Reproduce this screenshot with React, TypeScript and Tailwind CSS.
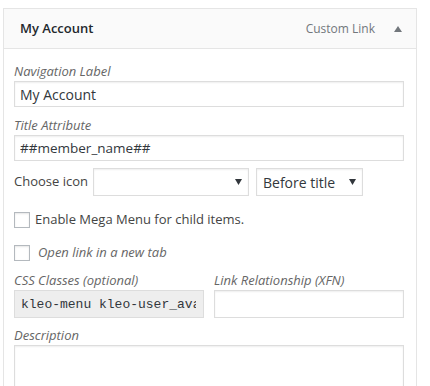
import { useState } from "react";

const font = "font-['Open_Sans','Liberation_Sans',sans-serif]";

function Label({ children }: { children: React.ReactNode }) {
  return (
    <label className="block h-[20px] text-[13px] italic leading-[20px] text-[#666]">
      {children}
    </label>
  );
}

function Checkbox({ checked, onChange }: { checked: boolean; onChange: () => void }) {
  return (
    <button
      type="button"
      onClick={onChange}
      className="h-[16px] w-[16px] shrink-0 border border-[#b4b9be] bg-white shadow-[inset_0_1px_2px_rgba(0,0,0,0.1)]"
    >
      {checked && <span className="block text-[12px] leading-[14px] text-[#1e8cbe]">✓</span>}
    </button>
  );
}

function Caret() {
  return (
    <svg width="7" height="6" viewBox="0 0 7 6" className="shrink-0">
      <path d="M0 0h7L3.5 6z" fill="#32373c" />
    </svg>
  );
}

export default function App() {
  const [label, setLabel] = useState("My Account");
  const [title, setTitle] = useState("##member_name##");
  const [mega, setMega] = useState(false);
  const [newTab, setNewTab] = useState(false);
  const [xfn, setXfn] = useState("");
  const [desc, setDesc] = useState("");

  return (
    <div className={`h-[386px] w-[430px] overflow-hidden bg-white ${font}`}>
      <div className="ml-[3px] mt-[8px] w-[414px] border border-[#e5e5e5]">
        <div className="flex h-[40px] items-center border-b border-[#e5e5e5] bg-[#fafafa] pl-[16px] pr-[14px]">
          <span className="flex-1 text-[13px] font-semibold text-[#23282d]">My Account</span>
          <span className="text-[12px] text-[#72777c]">Custom Link</span>
          <svg width="8" height="6" viewBox="0 0 8 6" className="ml-[19px]">
            <path d="M0 6h8L4 0z" fill="#72777c" />
          </svg>
        </div>

        <div className="pl-[10px] pr-[12px] pt-[12px]">
          <Label>Navigation Label</Label>
          <input
            value={label}
            onChange={(e) => setLabel(e.target.value)}
            className="block h-[26px] w-full border border-[#ddd] px-[5px] text-[14px] text-[#32373c] shadow-[inset_0_1px_2px_rgba(0,0,0,0.07)] outline-none"
          />

          <div className="mt-[8px]">
            <Label>Title Attribute</Label>
          </div>
          <input
            value={title}
            onChange={(e) => setTitle(e.target.value)}
            className="block h-[26px] w-full border border-[#ddd] px-[5px] text-[13.5px] text-[#32373c] shadow-[inset_0_1px_2px_rgba(0,0,0,0.07)] outline-none"
          />

          <div className="mt-[7px] flex h-[28px] items-center">
            <span className="mr-[5px] text-[13px] text-[#444]">Choose icon</span>
            <div className="flex h-[28px] w-[156px] items-center justify-end border border-[#ddd] pr-[6px] shadow-[inset_0_1px_2px_rgba(0,0,0,0.07)]">
              <Caret />
            </div>
            <div className="ml-[7px] flex h-[28px] w-[107px] items-center border border-[#ddd] pl-[6px] pr-[6px] shadow-[inset_0_1px_2px_rgba(0,0,0,0.07)]">
              <span className="flex-1 text-[14px] text-[#32373c]">Before title</span>
              <Caret />
            </div>
          </div>

          <div className="mt-[16px] flex h-[16px] items-center gap-[5px]">
            <Checkbox checked={mega} onChange={() => setMega(!mega)} />
            <span className="text-[13px] text-[#444]">Enable Mega Menu for child items.</span>
          </div>

          <div className="mt-[17px] flex h-[16px] items-center gap-[8px]">
            <Checkbox checked={newTab} onChange={() => setNewTab(!newTab)} />
            <span className="text-[13px] italic text-[#666]">Open link in a new tab</span>
          </div>

          <div className="mt-[9px] grid grid-cols-2 gap-[10px]">
            <div>
              <Label>CSS Classes (optional)</Label>
              <input
                readOnly
                value="kleo-menu kleo-user_avatar"
                className="block h-[28px] w-full border border-[#ddd] bg-[#eee] pl-[6px] pr-[7px] font-['Liberation_Mono',monospace] text-[13px] text-[#32373c] outline-none"
              />
            </div>
            <div>
              <Label>Link Relationship (XFN)</Label>
              <input
                value={xfn}
                onChange={(e) => setXfn(e.target.value)}
                className="block h-[28px] w-full border border-[#ddd] px-[5px] text-[14px] shadow-[inset_0_1px_2px_rgba(0,0,0,0.07)] outline-none"
              />
            </div>
          </div>

          <div className="mt-[7px]">
            <Label>Description</Label>
          </div>
          <textarea
            value={desc}
            onChange={(e) => setDesc(e.target.value)}
            className="block h-[80px] w-full resize-none border border-[#ddd] shadow-[inset_0_1px_2px_rgba(0,0,0,0.07)] outline-none"
          />
        </div>
      </div>
    </div>
  );
}
